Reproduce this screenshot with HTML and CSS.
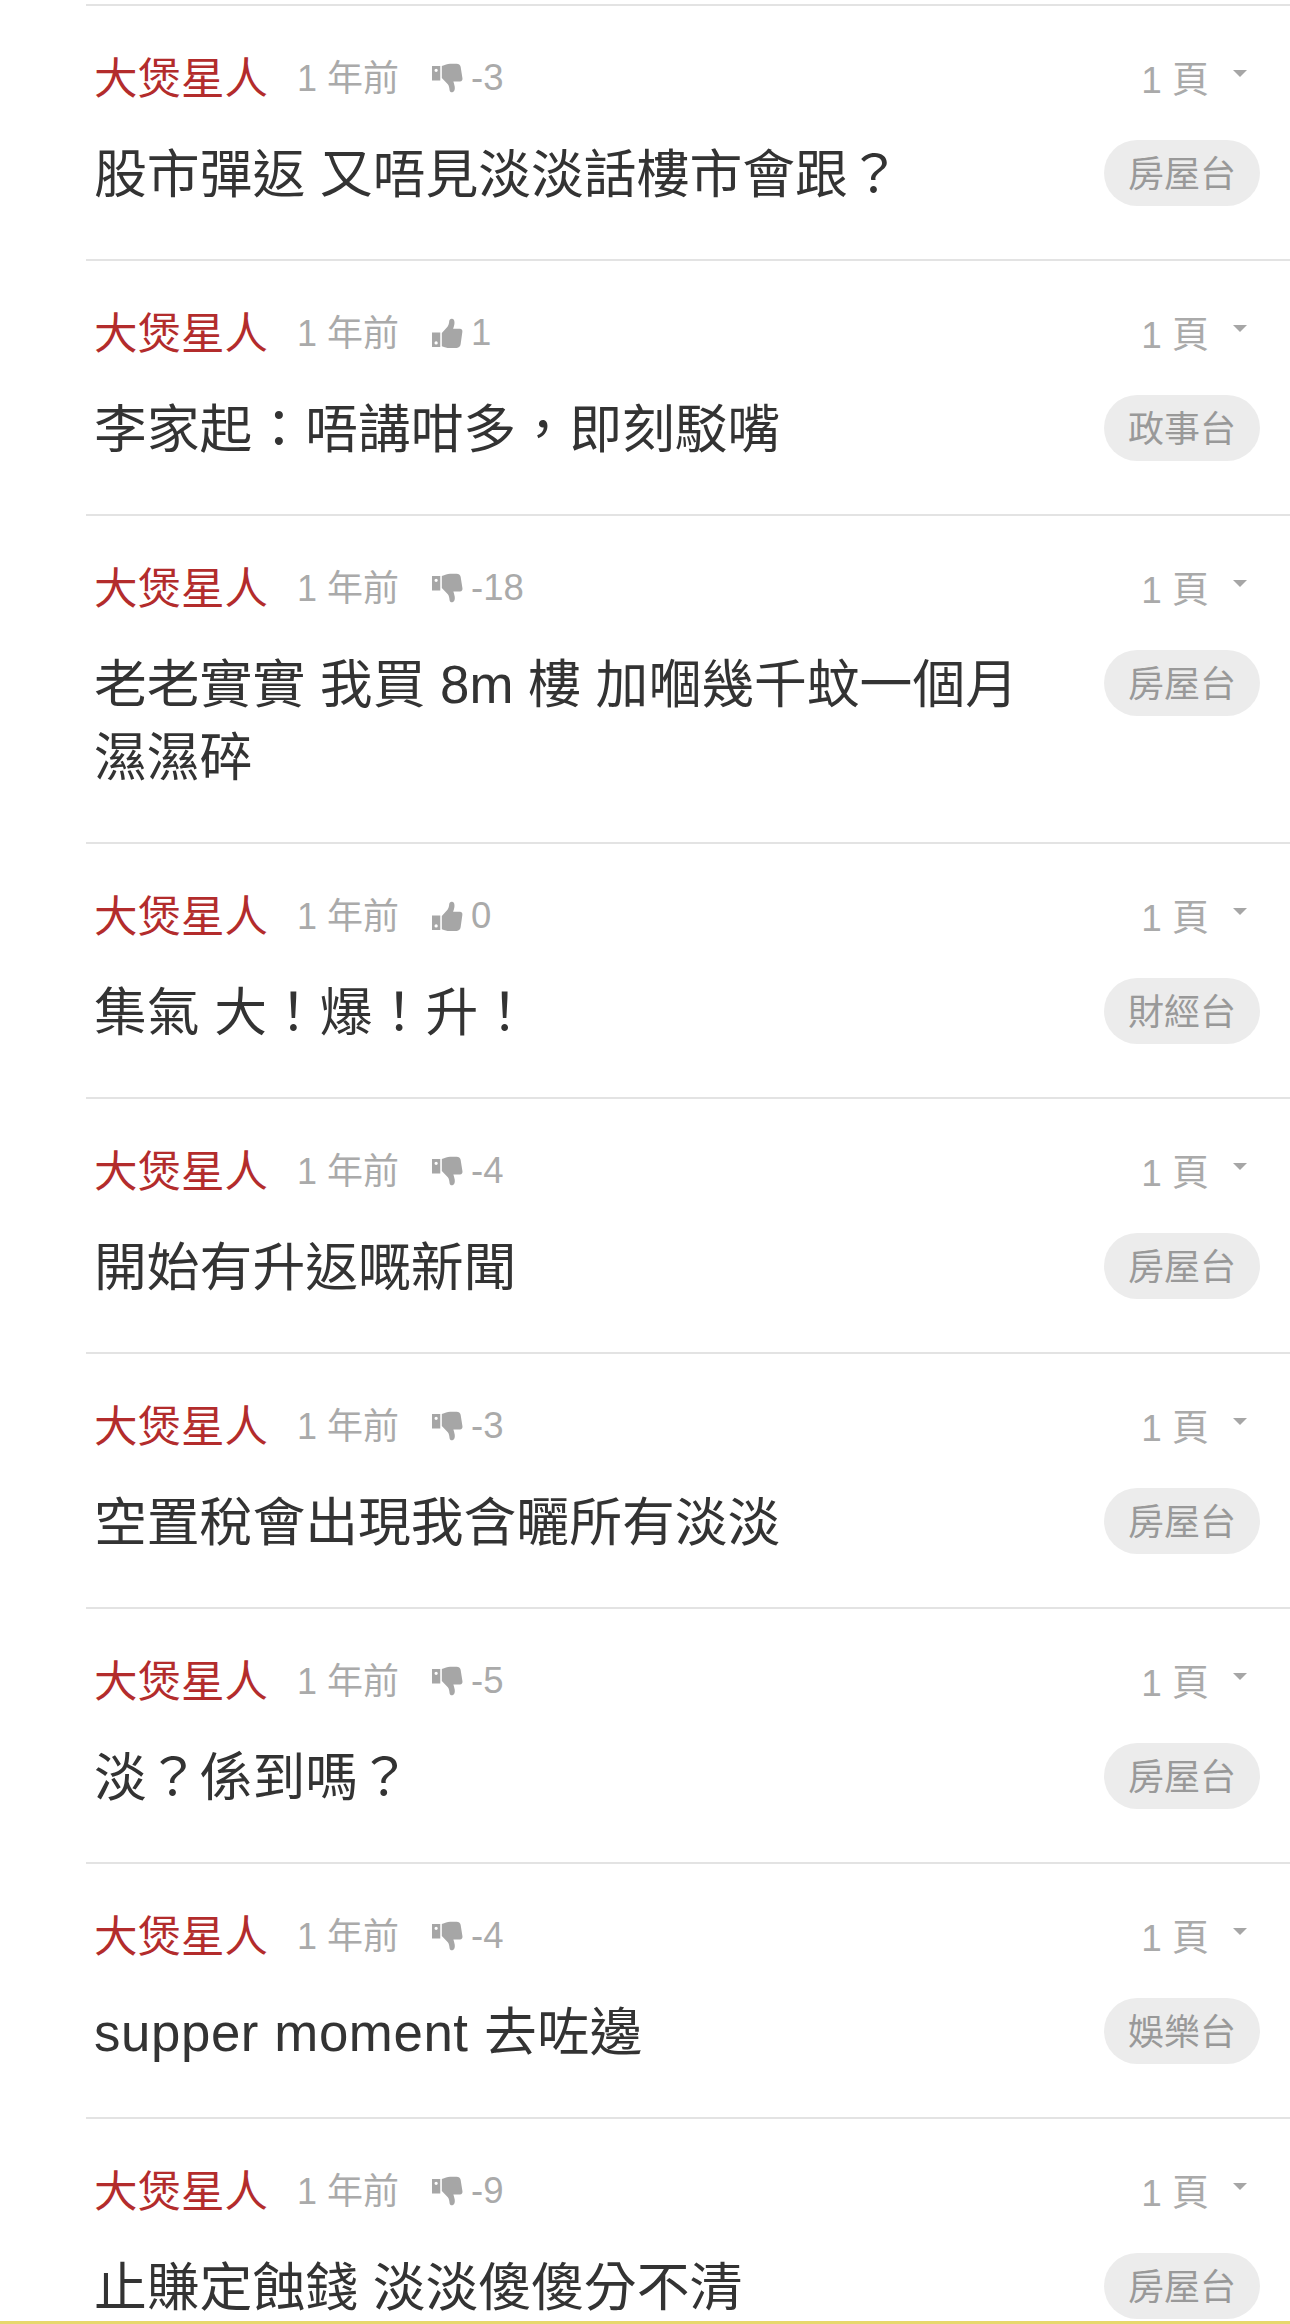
FILE: index.html
```html
<!DOCTYPE html>
<html lang="zh-Hant">
<head>
  <meta charset="UTF-8" />
  <title>大煲星人</title>
  <link rel="stylesheet" href="styles.css">
</head>
<body>

<svg class="icon-defs" width="0" height="0">
  <symbol id="thumb-up" viewBox="0 0 30 30">
    <path fill-rule="evenodd" d="M0 14h8v14H0zM4 22.5a1.6 1.6 0 1 0 0 3.2 1.6 1.6 0 0 0 0-3.2z"/>
    <path d="M9.500 14.500 15 8.500c1-1.300 1.500-3 1.700-5.500.1-1.500 1.300-2.500 2.800-2.200 2 .4 2.500 2.500 2.200 5-.2 1.700-.8 3.200-1.300 4.700h6.600c1.800 0 2.600 1.400 2.400 2.800l-1.700 12.200c-.3 2-1.600 3.500-3.800 3.500h-7c-2.500 0-4.500-.7-7.400-1.700z"/>
  </symbol>
  <symbol id="thumb-down" viewBox="0 0 30 30">
    <path fill-rule="evenodd" d="M0 3h8v14H0zM4 5.500a1.600 1.600 0 1 0 0 3.200 1.600 1.600 0 0 0 0-3.200z"/>
    <path d="M9.500 3c3-1.300 5.500-2.300 8-2.300h6.200c2.200 0 3.500 1.200 4 3l1.800 11.300c.2 1.500-.7 2.800-2.400 2.800h-6.400c.5 1.700 1.100 3.400 1.300 5.200.3 2.500-.2 4.900-2.200 5.300-1.500.3-2.700-.7-2.800-2.200-.2-2.500-.7-4.200-1.700-5.500l-5.800-6z"/>
  </symbol>
</svg>

<div class="page">
  <ul class="topic-list">

    <li class="topic">
      <div class="topic-meta">
        <span class="author">大煲星人</span>
        <span class="age">1 年前</span>
        <span class="votes"><svg class="thumb"><use href="#thumb-down"/></svg>-3</span>
        <span class="pages">1 頁<i class="caret"></i></span>
      </div>
      <div class="topic-body">
        <div class="title">股市彈返 又唔見淡淡話樓市會跟？</div>
        <span class="channel">房屋台</span>
      </div>
    </li>

    <li class="topic">
      <div class="topic-meta">
        <span class="author">大煲星人</span>
        <span class="age">1 年前</span>
        <span class="votes"><svg class="thumb"><use href="#thumb-up"/></svg>1</span>
        <span class="pages">1 頁<i class="caret"></i></span>
      </div>
      <div class="topic-body">
        <div class="title">李家起：唔講咁多，即刻駁嘴</div>
        <span class="channel">政事台</span>
      </div>
    </li>

    <li class="topic">
      <div class="topic-meta">
        <span class="author">大煲星人</span>
        <span class="age">1 年前</span>
        <span class="votes"><svg class="thumb"><use href="#thumb-down"/></svg>-18</span>
        <span class="pages">1 頁<i class="caret"></i></span>
      </div>
      <div class="topic-body">
        <div class="title">老老實實 我買 8m 樓 加嗰幾千蚊一個月濕濕碎</div>
        <span class="channel">房屋台</span>
      </div>
    </li>

    <li class="topic">
      <div class="topic-meta">
        <span class="author">大煲星人</span>
        <span class="age">1 年前</span>
        <span class="votes"><svg class="thumb"><use href="#thumb-up"/></svg>0</span>
        <span class="pages">1 頁<i class="caret"></i></span>
      </div>
      <div class="topic-body">
        <div class="title">集氣 大！爆！升！</div>
        <span class="channel">財經台</span>
      </div>
    </li>

    <li class="topic">
      <div class="topic-meta">
        <span class="author">大煲星人</span>
        <span class="age">1 年前</span>
        <span class="votes"><svg class="thumb"><use href="#thumb-down"/></svg>-4</span>
        <span class="pages">1 頁<i class="caret"></i></span>
      </div>
      <div class="topic-body">
        <div class="title">開始有升返嘅新聞</div>
        <span class="channel">房屋台</span>
      </div>
    </li>

    <li class="topic">
      <div class="topic-meta">
        <span class="author">大煲星人</span>
        <span class="age">1 年前</span>
        <span class="votes"><svg class="thumb"><use href="#thumb-down"/></svg>-3</span>
        <span class="pages">1 頁<i class="caret"></i></span>
      </div>
      <div class="topic-body">
        <div class="title">空置稅會出現我含曬所有淡淡</div>
        <span class="channel">房屋台</span>
      </div>
    </li>

    <li class="topic">
      <div class="topic-meta">
        <span class="author">大煲星人</span>
        <span class="age">1 年前</span>
        <span class="votes"><svg class="thumb"><use href="#thumb-down"/></svg>-5</span>
        <span class="pages">1 頁<i class="caret"></i></span>
      </div>
      <div class="topic-body">
        <div class="title">淡？係到嗎？</div>
        <span class="channel">房屋台</span>
      </div>
    </li>

    <li class="topic">
      <div class="topic-meta">
        <span class="author">大煲星人</span>
        <span class="age">1 年前</span>
        <span class="votes"><svg class="thumb"><use href="#thumb-down"/></svg>-4</span>
        <span class="pages">1 頁<i class="caret"></i></span>
      </div>
      <div class="topic-body">
        <div class="title"><span class="latin">supper moment </span>去咗邊</div>
        <span class="channel">娛樂台</span>
      </div>
    </li>

    <li class="topic">
      <div class="topic-meta">
        <span class="author">大煲星人</span>
        <span class="age">1 年前</span>
        <span class="votes"><svg class="thumb"><use href="#thumb-down"/></svg>-9</span>
        <span class="pages">1 頁<i class="caret"></i></span>
      </div>
      <div class="topic-body">
        <div class="title">止賺定蝕錢 淡淡傻傻分不清</div>
        <span class="channel">房屋台</span>
      </div>
    </li>

  </ul>
  <div class="bottom-bar"></div>
</div>

</body>
</html>
```

FILE: styles.css
```css
* { box-sizing: border-box; }

body {
  margin: 0;
  background: #fff;
  font-family: "Liberation Sans", "Noto Sans CJK TC", sans-serif;
  color: #333;
}

.icon-defs {
  position: absolute;
}

.page {
  display: flex;
  flex-direction: column;
  height: 100vh;
  overflow: hidden;
}

.topic-list {
  flex: 1;
  min-height: 0;
  overflow: hidden;
  list-style: none;
  margin: 0;
  padding: 4px 0 0 86px;
}

.topic {
  border-top: 2px solid #e3e3e3;
  padding: 44px 30px 48px 8px;
}

.topic-meta {
  display: flex;
  align-items: center;
  height: 50px;
}

.author {
  font-size: 43.5px;
  color: #b32c2c;
}

.age {
  margin-left: 29px;
  font-size: 36px;
  color: #aaa;
}

.votes {
  display: flex;
  align-items: center;
  margin-top: 6px;
  margin-left: 33px;
  font-size: 36.5px;
  color: #aaa;
}

.thumb {
  width: 31px;
  height: 31px;
  margin-right: 8px;
  fill: #a6a6a6;
}

.pages {
  display: flex;
  align-items: center;
  margin-top: 4px;
  margin-left: auto;
  font-size: 37px;
  color: #aaa;
}

.caret {
  width: 0;
  height: 0;
  margin: -8px 13px 0 24px;
  border-left: 7px solid transparent;
  border-right: 7px solid transparent;
  border-top: 7px solid #a6a6a6;
}

.topic-body {
  display: flex;
  align-items: flex-start;
  margin-top: 38px;
}

.title {
  flex: 1;
  font-size: 52.8px;
  line-height: 73px;
  padding-right: 50px;
}

.latin {
  letter-spacing: 0.6px;
}

.channel {
  flex: none;
  margin-top: 2px;
  height: 66px;
  line-height: 70px;
  padding: 0 24px;
  border-radius: 33px;
  background: #ececec;
  font-size: 36px;
  color: #999;
}

.bottom-bar {
  flex: none;
  height: 3px;
  background: #e6d86c;
}
```
